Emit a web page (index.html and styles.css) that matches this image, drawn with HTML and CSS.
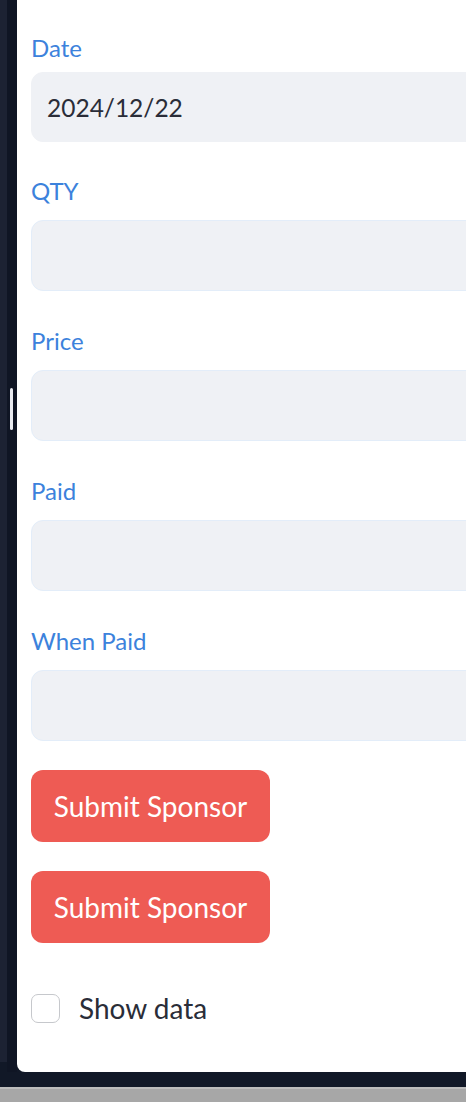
FILE: index.html
```html
<!DOCTYPE html>
<html>
<head>
<meta charset="utf-8">
<link rel="stylesheet" href="styles.css">
</head>
<body>
<div class="frame">
  <div class="rail">
    <div class="rail-light"></div>
    <div class="rail-dark"></div>
    <div class="scroll-handle"></div>
  </div>
  <main class="card">
    <div class="field field-first">
      <label class="label">Date</label>
      <div class="input filled">2024/12/22</div>
    </div>
    <div class="field">
      <label class="label">QTY</label>
      <div class="input"></div>
    </div>
    <div class="field">
      <label class="label">Price</label>
      <div class="input"></div>
    </div>
    <div class="field">
      <label class="label">Paid</label>
      <div class="input"></div>
    </div>
    <div class="field field-last">
      <label class="label">When Paid</label>
      <div class="input"></div>
    </div>
    <button class="btn">Submit Sponsor</button>
    <button class="btn">Submit Sponsor</button>
    <div class="check-row">
      <span class="checkbox"></span>
      <span class="check-label">Show data</span>
    </div>
  </main>
</div>
<div class="bottom-dark"></div>
<div class="bottom-gray"></div>
</body>
</html>
```

FILE: styles.css
```css
html, body {
  margin: 0;
  padding: 0;
}
body {
  background: #111827;
  width: 466px;
  height: 1102px;
  overflow: hidden;
  font-family: Lato, "Liberation Sans", sans-serif;
}
.frame {
  display: flex;
  height: 1072px;
}
.rail {
  position: relative;
  display: flex;
  width: 17px;
  flex: none;
}
.rail-light {
  width: 7px;
  height: 1062px;
  background: #1c2233;
}
.rail-dark {
  width: 10px;
  background: #0f1524;
}
.scroll-handle {
  position: absolute;
  left: 10px;
  top: 388px;
  width: 3px;
  height: 42px;
  border-radius: 2px;
  background: #e8eaf0;
}
.card {
  flex: none;
  width: 520px;
  background: #ffffff;
  border-bottom-left-radius: 8px;
  box-sizing: border-box;
  padding: 34px 0 0 14px;
  display: flex;
  flex-direction: column;
  align-items: flex-start;
}
.field {
  display: flex;
  flex-direction: column;
  margin-bottom: 36px;
}
.label {
  font-size: 24px;
  line-height: 28px;
  color: #3c82dc;
  margin-bottom: 15px;
}
.input {
  width: 500px;
  height: 71px;
  box-sizing: border-box;
  background: #eff1f5;
  border: 1px solid #e3edf9;
  border-radius: 12px;
}
.field-first {
  margin-bottom: 35px;
}
.field-first .label {
  margin-bottom: 10px;
}
.input.filled {
  height: 70px;
  border-color: #eff1f5;
  font-size: 24.5px;
  color: #2a2d38;
  padding-left: 15px;
  display: flex;
  align-items: center;
}
.field-last {
  margin-bottom: 29px;
}
.btn {
  width: 239px;
  height: 72px;
  border: none;
  border-radius: 12px;
  background: #ee5b54;
  color: #ffffff;
  font-family: Lato, "Liberation Sans", sans-serif;
  font-size: 28px;
  padding: 0;
  margin-bottom: 29px;
}
.check-row {
  display: flex;
  align-items: center;
  margin-top: 19px;
  gap: 19px;
}
.checkbox {
  width: 29px;
  height: 29px;
  box-sizing: border-box;
  border: 1px solid #c6c8cc;
  border-radius: 7px;
  background: #fff;
}
.check-label {
  font-size: 28px;
  color: #2a2d38;
  line-height: 34px;
}
.bottom-dark {
  height: 15px;
  background: #111827;
}
.bottom-gray {
  height: 15px;
  background: #a7a7a7;
  border-top: 2px solid #bcbcbc;
  box-sizing: border-box;
}
```
